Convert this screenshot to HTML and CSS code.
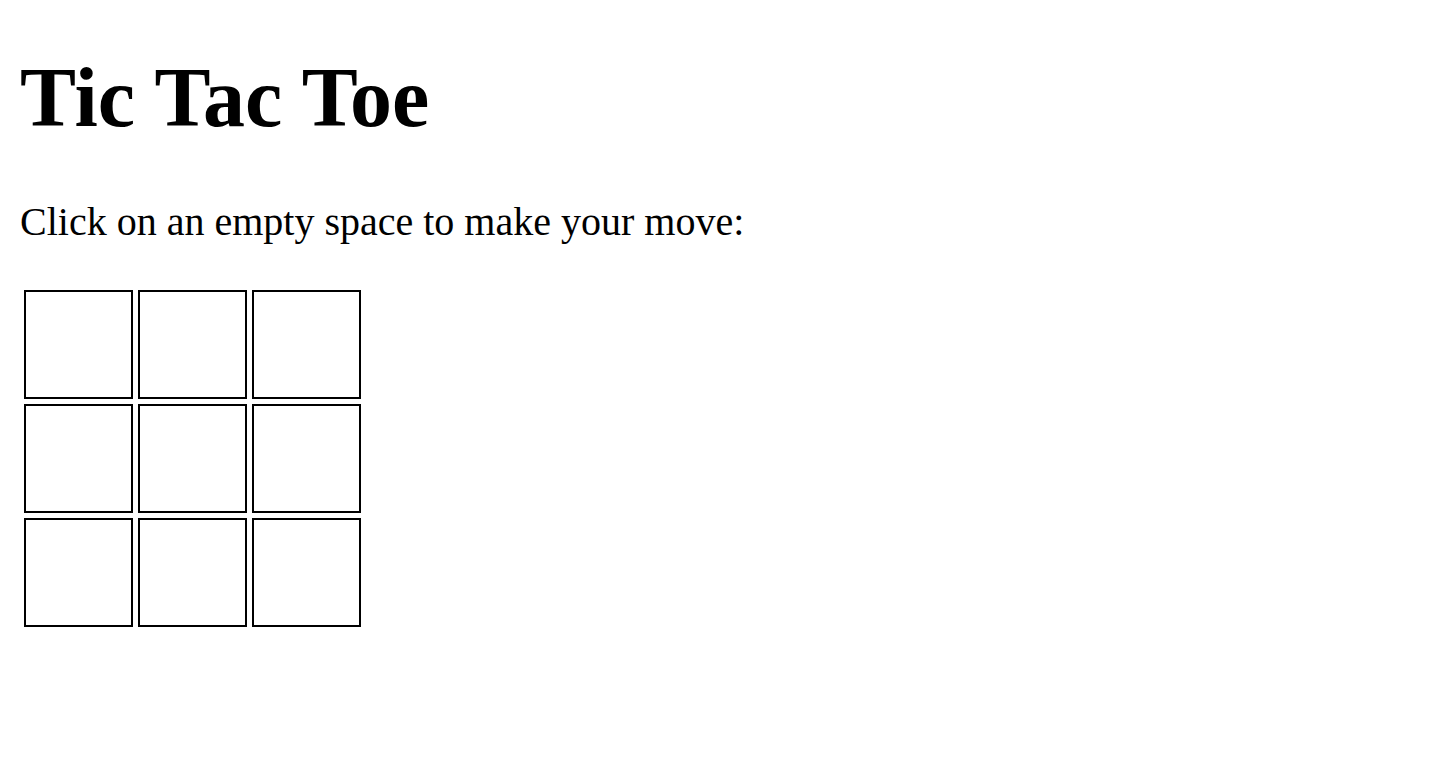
FILE: index.html
```html
<!DOCTYPE html>
<html lang="en">
<head>
<meta charset="utf-8">
<title>Tic Tac Toe</title>
<link rel="stylesheet" href="styles.css">
</head>
<body>
  <h1 class="title">Tic Tac Toe</h1>
  <p class="intro">Click on an empty space to make your move:</p>
  <div class="board">
    <div class="cell"></div>
    <div class="cell"></div>
    <div class="cell"></div>
    <div class="cell"></div>
    <div class="cell"></div>
    <div class="cell"></div>
    <div class="cell"></div>
    <div class="cell"></div>
    <div class="cell"></div>
  </div>
</body>
</html>
```

FILE: styles.css
```css
html, body {
  background: #ffffff;
}

body {
  margin: 0;
  padding: 0 20px;
  font-family: "Liberation Serif", "Times New Roman", serif;
  color: #000000;
}

.title {
  font-size: 84px;
  font-weight: bold;
  line-height: normal;
  margin: 49.4px 0 51.4px;
}

.intro {
  font-size: 40px;
  line-height: normal;
  margin: 40px 0;
}

.board {
  display: grid;
  grid-template-columns: repeat(3, 109px);
  grid-auto-rows: 109px;
  gap: 5px;
  width: max-content;
  margin: 45px 0 0 4px;
}

.cell {
  box-sizing: border-box;
  border: 2px solid #000000;
  background: #ffffff;
  cursor: pointer;
}
```
